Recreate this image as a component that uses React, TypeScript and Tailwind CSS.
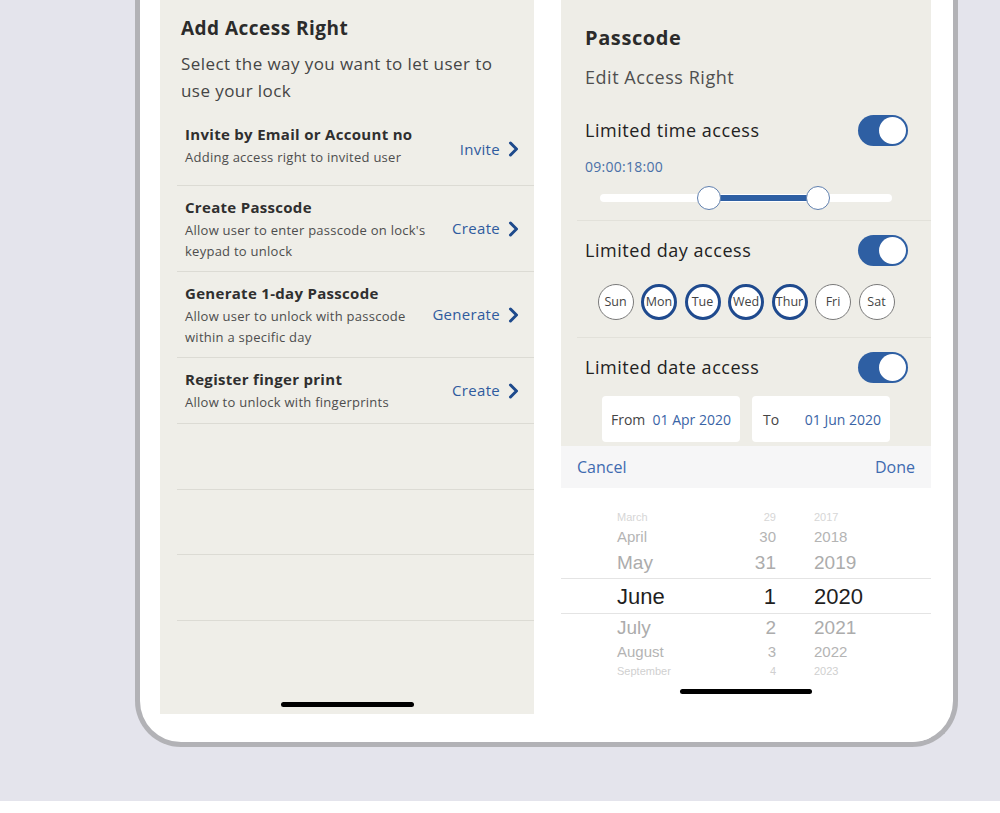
import React from "react";

const font = { fontFamily: '"Open Sans", "Liberation Sans", sans-serif' };
const pickerFont = { fontFamily: '"Liberation Sans", Roboto, sans-serif' };

const Chevron = () => (
  <svg width="11" height="16" viewBox="0 0 11 16" className="ml-[8px]">
    <path
      d="M2.5 2 L8.5 8 L2.5 14"
      fill="none"
      stroke="#1e4a8c"
      strokeWidth="3"
      strokeLinecap="round"
      strokeLinejoin="round"
    />
  </svg>
);

const Toggle = () => (
  <div className="w-[50px] h-[31px] rounded-full bg-[#2e5fa3] flex items-center justify-end pr-[2px]">
    <div className="w-[27px] h-[27px] rounded-full bg-white" />
  </div>
);

const options = [
  {
    title: "Invite by Email or Account no",
    sub: ["Adding access right to invited user"],
    action: "Invite",
    h: "h-[73px]",
  },
  {
    title: "Create Passcode",
    sub: ["Allow user to enter passcode on lock's", "keypad to unlock"],
    action: "Create",
    h: "h-[86px]",
  },
  {
    title: "Generate 1-day Passcode",
    sub: ["Allow user to unlock with passcode", "within a specific day"],
    action: "Generate",
    h: "h-[86px]",
  },
  {
    title: "Register finger print",
    sub: ["Allow to unlock with fingerprints"],
    action: "Create",
    h: "h-[66px]",
  },
];

const days = [
  { d: "Sun", on: false },
  { d: "Mon", on: true },
  { d: "Tue", on: true },
  { d: "Wed", on: true },
  { d: "Thur", on: true },
  { d: "Fri", on: false },
  { d: "Sat", on: false },
];

const pickerRows = [
  { m: "March", d: "29", y: "2017", h: "h-[18px]", cls: "text-[11px] text-[#d6d6d6]" },
  { m: "April", d: "30", y: "2018", h: "h-[22px]", cls: "text-[15px] text-[#b4b4b4]" },
  { m: "May", d: "31", y: "2019", h: "h-[30px]", cls: "text-[19px] text-[#acacac]" },
  { m: "June", d: "1", y: "2020", h: "h-[36px]", cls: "text-[22px] text-[#1f1f1f]", sel: true },
  { m: "July", d: "2", y: "2021", h: "h-[28px]", cls: "text-[19px] text-[#acacac]" },
  { m: "August", d: "3", y: "2022", h: "h-[21px]", cls: "text-[15px] text-[#b4b4b4]" },
  { m: "September", d: "4", y: "2023", h: "h-[17px]", cls: "text-[11px] text-[#d0d0d0]" },
];

const LeftScreen = () => (
  <div className="w-[374px] h-[714px] bg-[#efeee8] flex flex-col">
    <div className="pl-[21px] pt-[16px]">
      <div className="text-[19px] leading-[24px] font-bold tracking-[0.025em] text-[#2b2b2b]">
        Add Access Right
      </div>
      <div className="mt-[10px] text-[17px] leading-[27px] tracking-[0.025em] text-[#454545]">
        Select the way you want to let user to
        <br />
        use your lock
      </div>
    </div>
    <div className="pl-[17px] mt-[9px]">
      {options.map((o) => (
        <div
          key={o.title}
          className={`${o.h} border-b border-[#dcdbd4] flex items-center justify-between pl-[8px] pr-[15px]`}
        >
          <div className="self-start pt-[12px]">
            <div className="text-[15px] leading-[18px] font-bold tracking-[0.02em] text-[#2f2f2f]">
              {o.title}
            </div>
            <div className="mt-[4px]">
              {o.sub.map((s) => (
                <div key={s} className="text-[13px] leading-[21px] tracking-[0.02em] text-[#4d4d4d]">
                  {s}
                </div>
              ))}
            </div>
          </div>
          <div className="flex items-center text-[15px] tracking-[0.02em] text-[#2f5b9e]">
            {o.action}
            <Chevron />
          </div>
        </div>
      ))}
      <div className="h-[66px] border-b border-[#dcdbd4]" />
      <div className="h-[65px] border-b border-[#dcdbd4]" />
      <div className="h-[66px] border-b border-[#dcdbd4]" />
    </div>
    <div className="mt-auto mb-[7px] flex justify-center">
      <div className="w-[133px] h-[5px] rounded-full bg-black" />
    </div>
  </div>
);

const RightScreen = () => (
  <div className="w-[370px] flex flex-col">
    <div className="h-[446px] bg-[#eeede7] flex flex-col">
      <div className="pl-[24px] pt-[26px]">
        <div className="text-[20px] leading-[24px] font-bold tracking-[0.03em] text-[#2b2b2b]">
          Passcode
        </div>
        <div className="mt-[15px] text-[18px] leading-[24px] tracking-[0.03em] text-[#4f4f4f]">
          Edit Access Right
        </div>
      </div>
      <div className="pl-[24px] pr-[23px] mt-[26px] flex items-center justify-between">
        <div className="text-[18px] tracking-[0.03em] text-[#222]">Limited time access</div>
        <Toggle />
      </div>
      <div className="pl-[24px] mt-[12px] text-[14px] leading-[18px] tracking-[0.02em] text-[#4a70a8]">
        09:00:18:00
      </div>
      <div className="px-[39px] mt-[10px] h-[24px] flex items-center">
        <div className="relative w-full h-[8px] rounded-full bg-white">
          <div className="absolute left-[109px] w-[109px] top-[1px] h-[6px] bg-[#2e5fa3]" />
          <div className="absolute left-[97px] top-[-8px] w-[24px] h-[24px] rounded-full bg-white border-[1.5px] border-[#5f7fae]" />
          <div className="absolute left-[206px] top-[-8px] w-[24px] h-[24px] rounded-full bg-white border-[1.5px] border-[#5f7fae]" />
        </div>
      </div>
      <div className="mt-[10px] ml-[16px] border-b border-[#e2e1da]" />
      <div className="pl-[24px] pr-[23px] mt-[14px] flex items-center justify-between">
        <div className="text-[18px] tracking-[0.03em] text-[#222]">Limited day access</div>
        <Toggle />
      </div>
      <div className="mt-[18px] flex justify-center gap-[7.5px]">
        {days.map((x) => (
          <div
            key={x.d}
            className={`w-[36px] h-[36px] rounded-full bg-white flex items-center justify-center text-[12.5px] text-[#444] ${
              x.on ? "border-[3px] border-[#1f4a8e]" : "border-[1.5px] border-[#7a7a7a]"
            }`}
          >
            {x.d}
          </div>
        ))}
      </div>
      <div className="mt-[17px] ml-[16px] border-b border-[#e2e1da]" />
      <div className="pl-[24px] pr-[23px] mt-[14px] flex items-center justify-between">
        <div className="text-[18px] tracking-[0.03em] text-[#222]">Limited date access</div>
        <Toggle />
      </div>
      <div className="mt-[13px] flex justify-center gap-[12px]">
        <div className="w-[138px] h-[46px] bg-white rounded-[4px] flex items-center justify-between px-[9px] text-[14px]">
          <span className="text-[#454545]">From</span>
          <span className="text-[#3a64a6]">01 Apr 2020</span>
        </div>
        <div className="w-[138px] h-[46px] bg-white rounded-[4px] flex items-center justify-between pl-[11px] pr-[9px] text-[14px]">
          <span className="text-[#454545]">To</span>
          <span className="text-[#3a64a6]">01 Jun 2020</span>
        </div>
      </div>
    </div>
    <div className="h-[42px] bg-[#f6f6f7] flex items-center justify-between px-[16px] text-[16px] text-[#3f6bb0]">
      <span>Cancel</span>
      <span>Done</span>
    </div>
    <div className="flex-1 bg-white flex flex-col pt-[20px]" style={pickerFont}>
      {pickerRows.map((r) => (
        <div
          key={r.m}
          className={`${r.h} flex items-center ${r.cls} ${
            r.sel ? "border-y border-[#e4e4e4]" : ""
          }`}
        >
          <div className="pl-[56px] w-[185px]">{r.m}</div>
          <div className="w-[30px] text-right">{r.d}</div>
          <div className="pl-[38px]">{r.y}</div>
        </div>
      ))}
      <div className="mt-[9px] flex justify-center">
        <div className="w-[132px] h-[5px] rounded-full bg-black" />
      </div>
    </div>
  </div>
);

export default function App() {
  return (
    <div className="w-[1000px] h-[813px] flex flex-col bg-white" style={font}>
      <div className="h-[801px] bg-[#e4e4ec]">
        <div className="ml-[135px] w-[823px] h-[747px] bg-white border-[5px] border-t-0 border-[#b2b2b6] rounded-b-[46px] overflow-hidden flex pl-[20px] gap-[27px]">
          <LeftScreen />
          <RightScreen />
        </div>
      </div>
    </div>
  );
}
